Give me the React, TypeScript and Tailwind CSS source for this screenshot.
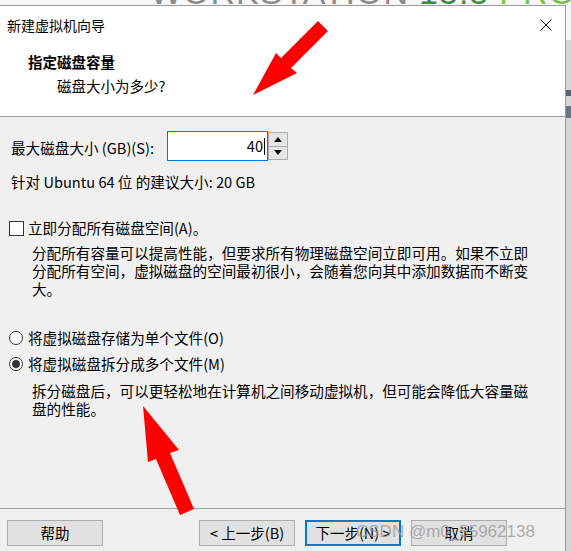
import React from 'react';

const font = "font-['Noto_Sans_CJK_SC','Noto_Sans',sans-serif]";

function Arrow({ points }: { points: string }) {
  return (
    <svg className="pointer-events-none absolute left-0 top-0" width="571" height="551" viewBox="0 0 571 551">
      <polygon points={points} fill="#ff0000" />
    </svg>
  );
}

function WinButton({ label, primary }: { label: string; primary?: boolean }) {
  return (
    <div
      className={`flex h-[26px] w-[96px] items-center justify-center bg-[#e1e1e1] text-[14.5px] leading-none text-black ${
        primary ? 'border-2 border-[#0078d7]' : 'border border-[#adadad]'
      }`}
    >
      {label}
    </div>
  );
}

export default function App() {
  return (
    <div className={`relative h-[551px] w-[571px] overflow-hidden bg-[#f4f4f4] ${font}`}>
      {/* 背后的 Workstation 窗口 */}
      <div className="relative h-[5px] overflow-hidden bg-[#f7f7f7]">
        <div className="absolute left-[150px] top-[-25px] flex items-baseline gap-[10px] whitespace-nowrap font-['Liberation_Sans',sans-serif] text-[34px] font-light leading-none tracking-[1px]">
          <span className="text-[#8a8a8a]">WORKSTATION</span>
          <span className="text-[#3c8b3c]">15.5</span>
          <span className="text-[#7bbf4a]">PRO</span>
        </div>
      </div>

      <div className="flex h-[546px]">
        {/* 对话框 */}
        <div className="flex w-[566px] flex-col border-r border-t border-[#9a9a9a] bg-[#f0f0f0]">
          {/* 标题与头部 */}
          <div className="flex h-[110px] flex-col bg-white">
            <div className="flex h-[37px] items-center justify-between pl-[7px] pr-[13px]">
              <span className="text-[14px] leading-none text-black">新建虚拟机向导</span>
              <svg width="12" height="12" viewBox="0 0 12 12">
                <path d="M0.5 0.5 L11.5 11.5 M11.5 0.5 L0.5 11.5" stroke="#111" strokeWidth="1" />
              </svg>
            </div>
            <div className="pl-[28px] pt-[9px] text-[14.5px] font-bold leading-[20px] text-black">指定磁盘容量</div>
            <div className="pl-[57px] pt-[4px] text-[14.5px] leading-[20px] text-black">磁盘大小为多少?</div>
          </div>
          <div className="h-px bg-[#a0a0a0]" />

          {/* 主体 */}
          <div className="flex h-[391px] flex-col text-[14.6px] text-black">
            <div className="mt-[14px] flex items-center pl-[11px]">
              <span className="mt-[3px] w-[156px] leading-[20px]">最大磁盘大小 (GB)(S):</span>
              <div className="flex h-[30px] w-[101px] items-center justify-end border border-[#0078d7] bg-white pr-[2px]">
                <span className="leading-none">40</span>
                <span className="ml-px h-[17px] w-px bg-black" />
              </div>
              <div className="flex h-[28px] w-[20px] flex-col border border-[#adadad] bg-[#e5e5e5]">
                <div className="flex flex-1 items-center justify-center border-b border-[#adadad]">
                  <svg width="8" height="5" viewBox="0 0 8 5"><polygon points="0,5 8,5 4,0" fill="#111" /></svg>
                </div>
                <div className="flex flex-1 items-center justify-center">
                  <svg width="8" height="5" viewBox="0 0 8 5"><polygon points="0,0 8,0 4,5" fill="#111" /></svg>
                </div>
              </div>
            </div>

            <div className="mt-[11px] pl-[11px] leading-[20px]">针对 Ubuntu 64 位 的建议大小: 20 GB</div>

            <div className="mt-[26px] flex items-center pl-[9px]">
              <span className="h-[15px] w-[15px] border border-[#333] bg-white" />
              <span className="ml-[4px] leading-[20px]">立即分配所有磁盘空间(A)。</span>
            </div>
            <div className="mt-[6px] pl-[32px] leading-[18px]">
              <div>分配所有容量可以提高性能，但要求所有物理磁盘空间立即可用。如果不立即</div>
              <div>分配所有空间，虚拟磁盘的空间最初很小，会随着您向其中添加数据而不断变</div>
              <div>大。</div>
            </div>

            <div className="mt-[30px] flex items-center pl-[9px]">
              <span className="h-[14px] w-[14px] rounded-full border border-[#333] bg-white" />
              <span className="ml-[5px] leading-[20px]">将虚拟磁盘存储为单个文件(O)</span>
            </div>
            <div className="mt-[6px] flex items-center pl-[9px]">
              <span className="flex h-[14px] w-[14px] items-center justify-center rounded-full border border-[#333] bg-white">
                <span className="h-[8px] w-[8px] rounded-full bg-[#333]" />
              </span>
              <span className="ml-[5px] leading-[20px]">将虚拟磁盘拆分成多个文件(M)</span>
            </div>
            <div className="mt-[8px] pl-[32px] leading-[18px]">
              <div>拆分磁盘后，可以更轻松地在计算机之间移动虚拟机，但可能会降低大容量磁</div>
              <div>盘的性能。</div>
            </div>
          </div>

          <div className="h-px bg-[#a0a0a0]" />

          {/* 底部按钮 */}
          <div className="flex pl-[7px] pr-[58px] pt-[11px]">
            <WinButton label="帮助" />
            <div className="ml-auto flex gap-[10px]">
              <WinButton label="< 上一步(B)" />
              <WinButton label="下一步(N) >" primary />
              <WinButton label="取消" />
            </div>
          </div>
        </div>

        {/* 右侧背景 */}
        <div className="flex flex-1 flex-col bg-[#d6d6d6]">
          <div className="h-[35px] bg-[#f7f7f7]" />
          <div className="mt-[50px] h-[6px] bg-[#5a6470]" />
          <div className="mt-[10px] h-[12px] bg-[#6a7480]" />
        </div>
      </div>

      <Arrow points="253,95 276,53 281,58 318,21 328,31 291,68 297,73" />
      <Arrow points="143,406 179,450 170,453 194,509 180,515 156,459 148,462" />

      {/* 水印 */}
      <div className="pointer-events-none absolute left-[356px] top-[521px] whitespace-nowrap font-['Liberation_Sans',sans-serif] text-[17px] leading-[22px] text-[#9a9a9a]/80">
        CSDN @m0_55962138
      </div>
    </div>
  );
}
